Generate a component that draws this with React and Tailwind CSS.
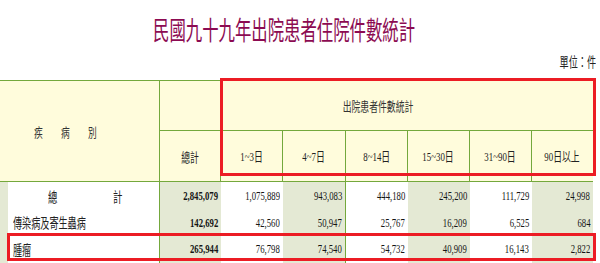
import React from "react";

const G = "border-[#74a83c]";
const serif = "font-['Liberation_Serif','Noto_Sans_CJK_TC',serif]";
const cjk = "font-['Noto_Sans_CJK_TC','Noto_Sans',sans-serif]";

const headers = ["1~3日", "4~7日", "8~14日", "15~30日", "31~90日", "90日以上"];

const rows = [
  { label: "total", vals: ["2,845,079", "1,075,889", "943,083", "444,180", "245,200", "111,729", "24,998"] },
  { label: "傳染病及寄生蟲病", vals: ["142,692", "42,560", "50,947", "25,767", "16,209", "6,525", "684"] },
  { label: "腫瘤", vals: ["265,944", "76,798", "74,540", "54,732", "40,909", "16,143", "2,822"] },
  { label: "", vals: ["", "", "", "", "", "", ""] },
];

const gray = [true, false, true, false, true, false, true];

function Num({ v, bold }) {
  return (
    <span
      className={`inline-block origin-right scale-x-[0.67] text-[13px] leading-[13px] text-[#151515] ${serif} ${
        bold ? "font-bold" : ""
      }`}
    >
      {v}
    </span>
  );
}

function Label({ row }) {
  if (row.label === "total") {
    return (
      <div className={`flex h-full items-center pl-[40px] gap-[51px] text-[14px] leading-[14px] text-[#222] ${cjk}`}>
        <span className="inline-block origin-left scale-x-[0.67]">總</span>
        <span className="inline-block origin-left scale-x-[0.67]">計</span>
      </div>
    );
  }
  return (
    <div className={`flex h-full items-center pl-[5px] text-[14px] leading-[14px] text-[#222] ${cjk}`}>
      <span className="inline-block origin-left scale-x-[0.65] whitespace-nowrap">{row.label}</span>
    </div>
  );
}

export default function App() {
  return (
    <div className="relative h-[263px] w-[600px] overflow-hidden bg-white">
      {/* Title */}
      <div className="h-[54px] pt-[16px] pl-[153px]">
        <span
          className={`inline-block origin-left scale-x-[0.63] whitespace-nowrap text-[26px] leading-[26px] text-[#8c0b52] ${cjk}`}
        >
          民國九十九年出院患者住院件數統計
        </span>
      </div>
      {/* Unit */}
      <div className="flex h-[26px] justify-end pr-[4px]">
        <span
          className={`inline-block origin-right scale-x-[0.65] whitespace-nowrap text-[14px] leading-[14px] text-[#222] ${cjk}`}
        >
          單位：件
        </span>
      </div>

      {/* Header */}
      <div
        className={`grid w-[593px] grid-cols-[160px_61px_62px_63px_62px_62px_62px_61px] grid-rows-[50px_50px] border-y bg-[#fffcdc] ${G}`}
      >
        <div className={`row-span-2 flex items-center border-r pl-[34px] gap-[14px] text-[13px] leading-[13px] text-[#333] ${G} ${cjk}`}>
          <span className="inline-block origin-left scale-x-[0.67]">疾</span>
          <span className="inline-block origin-left scale-x-[0.67]">病</span>
          <span className="inline-block origin-left scale-x-[0.67]">別</span>
        </div>
        <div className={`border-r border-b ${G}`} />
        <div className={`col-span-6 flex items-center justify-center border-b pr-[58px] ${G}`}>
          <span
            className={`inline-block scale-x-[0.68] whitespace-nowrap text-[13px] leading-[13px] text-[#333] ${cjk}`}
          >
            出院患者件數統計
          </span>
        </div>
        <div className={`flex items-center justify-center border-r ${G}`}>
          <span className={`inline-block scale-x-[0.68] whitespace-nowrap text-[13px] leading-[13px] text-[#222] ${cjk}`}>
            總計
          </span>
        </div>
        {headers.map((h, i) => (
          <div key={h} className={`flex items-center justify-center ${i < 5 ? "border-r" : ""} ${G}`}>
            <span className={`inline-block scale-x-[0.68] whitespace-nowrap text-[13px] leading-[13px] text-[#222] ${serif}`}>
              {h}
            </span>
          </div>
        ))}
      </div>

      {/* Body */}
      <div className="grid w-[593px] grid-cols-[160px_61px_62px_63px_62px_62px_62px_61px] grid-rows-[27px_26px_27px_10px]">
        {rows.map((row, ri) => (
          <React.Fragment key={ri}>
            <div className={`border-l-[8px] border-l-[#e4e9d4] border-r border-r-[#74a83c] bg-white`}>
              <Label row={row} />
            </div>
            {row.vals.map((v, ci) => (
              <div
                key={ci}
                className={`flex items-center justify-end pr-[3px] ${gray[ci] ? "bg-[#e4e9d4]" : "bg-white"} ${
                  ci === 2 ? "border-r border-r-[#74a83c]" : ""
                }`}
              >
                {v && <Num v={v} bold={ci === 0} />}
              </div>
            ))}
          </React.Fragment>
        ))}
      </div>

      {/* Red highlight boxes */}
      <div className="absolute left-[220px] top-[78px] h-[98px] w-[376px] border-[3px] border-[#ec1c24]" />
      <div className="absolute left-[7px] top-[233px] h-[28px] w-[589px] border-[3px] border-[#ec1c24]" />
    </div>
  );
}
